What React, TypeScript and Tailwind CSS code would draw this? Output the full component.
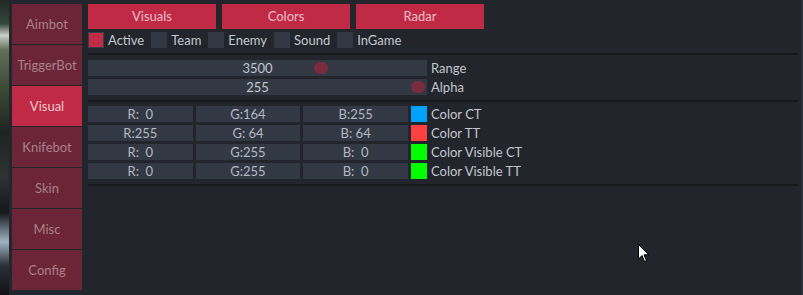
import React from 'react';

const tabs = ['Aimbot', 'TriggerBot', 'Visual', 'Knifebot', 'Skin', 'Misc', 'Config'];
const pages = ['Visuals', 'Colors', 'Radar'];

const toggles = [
  { label: 'Active', on: true },
  { label: 'Team', on: false },
  { label: 'Enemy', on: false },
  { label: 'Sound', on: false },
  { label: 'InGame', on: false },
];

const sliders = [
  { label: 'Range', value: 3500, max: 5000 },
  { label: 'Alpha', value: 255, max: 255 },
];

const colors = [
  { label: 'Color CT', r: '  0', g: '164', b: '255', swatch: 'bg-[#00a2ff]' },
  { label: 'Color TT', r: '255', g: ' 64', b: ' 64', swatch: 'bg-[#ff4040]' },
  { label: 'Color Visible CT', r: '  0', g: '255', b: '  0', swatch: 'bg-[#00ff00]' },
  { label: 'Color Visible TT', r: '  0', g: '255', b: '  0', swatch: 'bg-[#00ff00]' },
];

function Cursor() {
  return (
    <svg className="absolute left-[638px] top-[244px]" width="12" height="19" viewBox="0 0 12 19">
      <path d="M0.5 0.5 L0.5 15 L4 11.5 L6.5 17.5 L8.5 16.7 L6 10.8 L10.8 10.8 Z" fill="#fff" stroke="#000" strokeWidth="1" />
    </svg>
  );
}

export default function App() {
  return (
    <div
      className="relative flex w-[803px] h-[295px] overflow-hidden bg-[#22252c] text-[13px] leading-none"
      style={{ fontFamily: 'Lato, "Open Sans", sans-serif' }}
    >
      {/* game behind the window */}
      <div className="w-[9px] h-full bg-[linear-gradient(to_bottom,#1f2a24_0%,#34463a_8%,#c9cfc9_12%,#5f6f58_17%,#3b4a35_30%,#1e2420_45%,#2e3234_60%,#15181a_72%,#9fb3c4_82%,#2a3038_90%,#111316_100%)]" />

      {/* tabs */}
      <div className="ml-[3px] mt-[4px] flex w-[70px] flex-col gap-px">
        {tabs.map((t) => (
          <div
            key={t}
            className={
              t === 'Visual'
                ? 'flex h-[40px] items-center justify-center bg-[#c12a45] text-[#f0c8d0]'
                : 'flex h-[40px] items-center justify-center bg-[#6c2536] text-[#a8818b]'
            }
          >
            {t}
          </div>
        ))}
      </div>

      {/* main */}
      <div className="ml-[6px] mr-[3px] mt-[4px] flex flex-1 flex-col">
        <div className="flex gap-[6px]">
          {pages.map((p) => (
            <div key={p} className="flex h-[25px] w-[128px] items-center justify-center bg-[#c12a45] text-[#ecbfc8]">
              {p}
            </div>
          ))}
        </div>

        <div className="mt-[3px] flex h-[16px] items-center gap-[7px]">
          {toggles.map((c) => (
            <div key={c.label} className="flex items-center gap-[4px]">
              <div
                className={
                  c.on
                    ? 'h-[16px] w-[16px] border border-[#39404b] bg-[#c12a45]'
                    : 'h-[16px] w-[16px] bg-[#323844]'
                }
              />
              <span className="text-[#c3c7ce]">{c.label}</span>
            </div>
          ))}
        </div>

        <div className="mt-[5px] h-[2px] bg-[#17191d]" />

        <div className="mt-[5px] flex flex-col gap-[3px]">
          {sliders.map((s) => (
            <div key={s.label} className="flex items-center gap-[4px]">
              <div className="relative flex h-[16px] w-[339px] items-center justify-center bg-[#323844] text-[#c3c7ce]">
                {s.value}
                <div
                  className="absolute top-[2px] h-[12px] w-[14px] rounded-full bg-[#7a2b3d]"
                  style={{ left: (s.value / s.max) * 323 }}
                />
              </div>
              <span className="text-[#c3c7ce]">{s.label}</span>
            </div>
          ))}
        </div>

        <div className="mt-[5px] h-[2px] bg-[#17191d]" />

        <div className="mt-[4px] flex flex-col gap-[3px]">
          {colors.map((c) => (
            <div key={c.label} className="flex items-center">
              <div className="grid w-[320px] grid-cols-3 gap-[3px]">
                {[`R:${c.r}`, `G:${c.g}`, `B:${c.b}`].map((v) => (
                  <div key={v} className="flex h-[16px] items-center justify-center whitespace-pre bg-[#323844] text-[#b4b9c1]">
                    {v}
                  </div>
                ))}
              </div>
              <div className={`ml-[3px] h-[16px] w-[16px] ${c.swatch}`} />
              <span className="ml-[4px] text-[#c3c7ce]">{c.label}</span>
            </div>
          ))}
        </div>

        <div className="mt-[5px] h-[2px] bg-[#17191d]" />
      </div>

      <div className="w-[2px] h-full bg-[#2c3038]" />

      <Cursor />
    </div>
  );
}
